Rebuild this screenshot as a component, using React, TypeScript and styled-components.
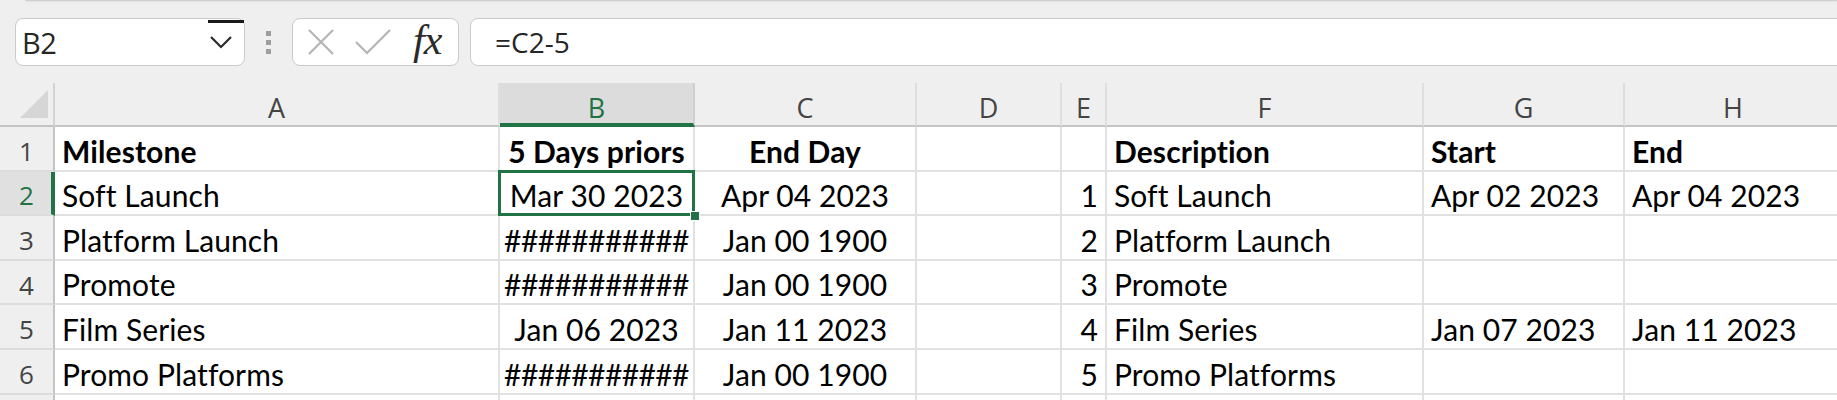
import React from "react";
import styled, { createGlobalStyle, css } from "styled-components";

const GREEN = "#217346";

const GlobalStyle = createGlobalStyle`
  html, body { margin: 0; padding: 0; background: #efefef; }
  * { box-sizing: border-box; }
`;

const Page = styled.div`
  width: 1837px;
  height: 400px;
  overflow: hidden;
  background: #efefef;
  display: flex;
  flex-direction: column;
`;

const TopStrip = styled.div`
  height: 3px;
  margin-left: 25px;
  background: #fafafa;
  border-bottom: 1px solid #cfcfcf;
  border-bottom-left-radius: 6px;
  box-shadow: 0 1px 2px rgba(0, 0, 0, 0.08);
`;

const Toolbar = styled.div`
  display: flex;
  align-items: center;
  height: 48px;
  margin-top: 17px;
  margin-bottom: 17px;
  padding-left: 15px;
`;

const Box = styled.div`
  height: 48px;
  background: #fff;
  border: 1.5px solid #cacaca;
  border-radius: 8px;
  display: flex;
  align-items: center;
`;

const NameBox = styled(Box)`
  width: 230px;
  position: relative;
  padding-left: 6px;
  font-family: "Open Sans", "Noto Sans", sans-serif;
  font-size: 29px;
  color: #262626;
`;

const NameText = styled.span`
  flex: 1;
  letter-spacing: -0.5px;
`;

const ChevronWrap = styled.span`
  width: 34px;
  display: flex;
  justify-content: center;
  margin-right: 6px;
`;

const CaretMark = styled.span`
  position: absolute;
  top: 1px;
  left: 192px;
  width: 36px;
  height: 3px;
  background: #1a1a1a;
`;

const Dots = styled.div`
  margin-left: 21px;
  width: 5px;
  display: flex;
  flex-direction: column;
  gap: 4px;
`;

const Dot = styled.span`
  width: 5px;
  height: 5px;
  background: #9e9e9e;
`;

const FxGroup = styled(Box)`
  margin-left: 21px;
  width: 167px;
  padding-left: 14px;
  gap: 20px;
`;

const FxLabel = styled.span`
  font-family: "Liberation Serif", "DejaVu Serif", serif;
  font-style: italic;
  font-size: 42px;
  color: #2a2a2a;
  margin-left: 2px;
  margin-top: -4px;
  letter-spacing: -1px;
`;

const FormulaBar = styled(Box)`
  margin-left: 11px;
  flex: 1;
  margin-right: -20px;
  padding-left: 24px;
  font-family: "Open Sans", "Noto Sans", sans-serif;
  font-size: 28px;
  color: #262626;
`;

const Grid = styled.div`
  display: grid;
  grid-template-columns: 55px 445px 195px 222px 145px 45px 317px 201px 218px 200px;
  grid-auto-rows: 44.6px;
  grid-template-rows: 44px;
  font-family: "Lato", "Noto Sans", sans-serif;
`;

const Corner = styled.div`
  position: relative;
  background: #efefef;
  border-right: 2px solid #d4d4d4;
  border-bottom: 2px solid #c4c4c4;
`;

const CornerTriangle = styled.svg`
  position: absolute;
  left: 20px;
  top: 7px;
`;

const ColHeader = styled.div<{ $selected?: boolean }>`
  display: flex;
  align-items: center;
  justify-content: center;
  padding-top: 6px;
  background: #efefef;
  border-right: 2px solid #dedede;
  border-bottom: 2px solid #c4c4c4;
  font-family: "Open Sans", "Noto Sans", sans-serif;
  font-size: 27px;
  color: #444;
  ${(p) =>
    p.$selected &&
    css`
      background: #dcdcdc;
      color: ${GREEN};
      border-bottom: 4px solid ${GREEN};
      padding-top: 8px;
      border-right-color: #d0d0d0;
    `}
`;

const RowHeader = styled.div<{ $selected?: boolean }>`
  display: flex;
  align-items: center;
  justify-content: center;
  padding-top: 5px;
  background: #efefef;
  border-right: 2px solid #c4c4c4;
  border-bottom: 2px solid #dcdcdc;
  font-family: "Open Sans", "Noto Sans", sans-serif;
  font-size: 26px;
  color: #444;
  ${(p) =>
    p.$selected &&
    css`
      background: #e0e0e0;
      color: ${GREEN};
      border-right: 4px solid ${GREEN};
      padding-left: 2px;
    `}
`;

type Align = "left" | "center" | "right";

const Cell = styled.div<{ $align?: Align; $bold?: boolean; $active?: boolean; $tight?: boolean }>`
  position: relative;
  display: flex;
  align-items: flex-end;
  justify-content: ${(p) =>
    p.$align === "center" ? "center" : p.$align === "right" ? "flex-end" : "flex-start"};
  padding: 0 7px 4px 7px;
  background: #fff;
  border-right: 2px solid #e1e1e1;
  border-bottom: 2px solid #e1e1e1;
  font-size: 30px;
  line-height: 1;
  letter-spacing: ${(p) => (p.$tight ? "-0.6px" : "0.1px")};
  font-weight: ${(p) => (p.$bold ? 700 : 400)};
  color: #000;
  white-space: nowrap;
  overflow: visible;
  ${(p) =>
    p.$active &&
    css`
      &::after {
        content: "";
        position: absolute;
        left: -2px;
        top: -2px;
        right: -2px;
        bottom: -2px;
        border: 3px solid ${GREEN};
        pointer-events: none;
      }
    `}
`;

const FillHandle = styled.span`
  position: absolute;
  right: -7px;
  bottom: -7px;
  width: 10px;
  height: 10px;
  background: ${GREEN};
  border: 1.5px solid #fff;
  z-index: 2;
`;

type CellDef = { t?: string; a?: Align; b?: boolean };

const HASH = "###########";

const rows: CellDef[][] = [
  [
    { t: "Milestone", b: true },
    { t: "5 Days priors", a: "center", b: true },
    { t: "End Day", a: "center", b: true },
    {},
    {},
    { t: "Description", b: true },
    { t: "Start", b: true },
    { t: "End", b: true },
    {},
  ],
  [
    { t: "Soft Launch" },
    { t: "Mar 30 2023", a: "center" },
    { t: "Apr 04 2023", a: "center" },
    {},
    { t: "1", a: "right" },
    { t: "Soft Launch" },
    { t: "Apr 02 2023" },
    { t: "Apr 04 2023" },
    {},
  ],
  [
    { t: "Platform Launch" },
    { t: HASH, a: "center" },
    { t: "Jan 00 1900", a: "center" },
    {},
    { t: "2", a: "right" },
    { t: "Platform Launch" },
    {},
    {},
    {},
  ],
  [
    { t: "Promote" },
    { t: HASH, a: "center" },
    { t: "Jan 00 1900", a: "center" },
    {},
    { t: "3", a: "right" },
    { t: "Promote" },
    {},
    {},
    {},
  ],
  [
    { t: "Film Series" },
    { t: "Jan 06 2023", a: "center" },
    { t: "Jan 11 2023", a: "center" },
    {},
    { t: "4", a: "right" },
    { t: "Film Series" },
    { t: "Jan 07 2023" },
    { t: "Jan 11 2023" },
    {},
  ],
  [
    { t: "Promo Platforms" },
    { t: HASH, a: "center" },
    { t: "Jan 00 1900", a: "center" },
    {},
    { t: "5", a: "right" },
    { t: "Promo Platforms" },
    {},
    {},
    {},
  ],
  [{}, {}, {}, {}, {}, {}, {}, {}, {}],
];

const cols = ["A", "B", "C", "D", "E", "F", "G", "H", ""];

export default function App() {
  return (
    <>
      <GlobalStyle />
      <Page>
        <TopStrip />
        <Toolbar>
          <NameBox>
            <NameText>B2</NameText>
            <CaretMark />
            <ChevronWrap>
              <svg width="24" height="14" viewBox="0 0 24 14">
                <polyline points="2,2 12,12 22,2" fill="none" stroke="#2a2a2a" strokeWidth="2.2" />
              </svg>
            </ChevronWrap>
          </NameBox>
          <Dots>
            <Dot />
            <Dot />
            <Dot />
          </Dots>
          <FxGroup>
            <svg width="28" height="28" viewBox="0 0 28 28">
              <path d="M2 2 L26 26 M26 2 L2 26" stroke="#b4b4b4" strokeWidth="2.2" fill="none" />
            </svg>
            <svg width="36" height="26" viewBox="0 0 36 26">
              <polyline points="1,13 12,24 35,1" stroke="#b4b4b4" strokeWidth="2.2" fill="none" />
            </svg>
            <FxLabel>fx</FxLabel>
          </FxGroup>
          <FormulaBar>=C2-5</FormulaBar>
        </Toolbar>
        <Grid>
          <Corner>
            <CornerTriangle width="29" height="29" viewBox="0 0 29 29">
              <polygon points="28,0 28,28 0,28" fill="#d6d6d6" />
            </CornerTriangle>
          </Corner>
          {cols.map((c, k) => (
            <ColHeader key={k} $selected={c === "B"}>
              {c}
            </ColHeader>
          ))}
          {rows.map((r, i) => (
            <React.Fragment key={i}>
              <RowHeader $selected={i === 1}>{i < 6 ? i + 1 : ""}</RowHeader>
              {r.map((cell, j) => {
                const active = i === 1 && j === 1;
                return (
                  <Cell
                    key={j}
                    $align={cell.a}
                    $bold={cell.b}
                    $active={active}
                    $tight={cell.t === HASH}
                  >
                    {cell.t}
                    {active && <FillHandle />}
                  </Cell>
                );
              })}
            </React.Fragment>
          ))}
        </Grid>
      </Page>
    </>
  );
}
